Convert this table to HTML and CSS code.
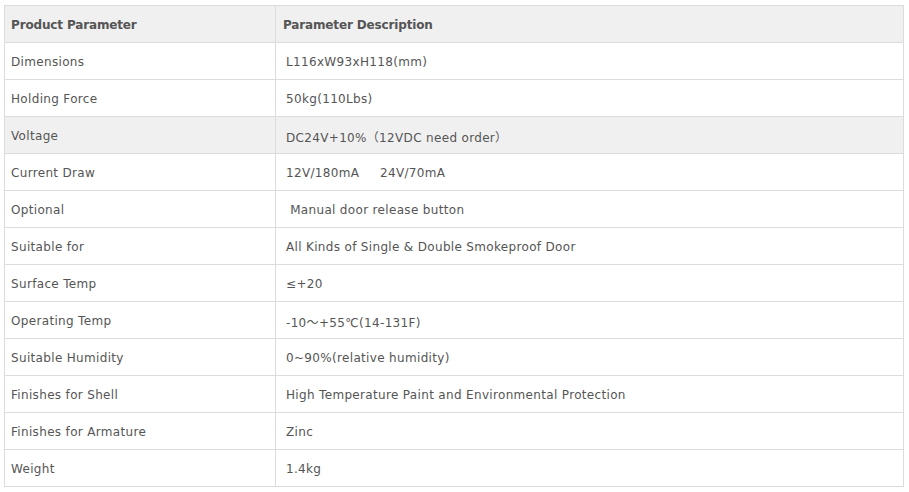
FILE: index.html
```html
<!DOCTYPE html>
<html>
<head>
<meta charset="utf-8">
<link rel="stylesheet" href="styles.css">
</head>
<body>
<table class="params">
  <tr class="head"><th class="c1">Product Parameter</th><th class="c2">Parameter Description</th></tr>
  <tr><td class="c1">Dimensions</td><td class="c2">L116xW93xH118(mm)</td></tr>
  <tr><td class="c1">Holding Force</td><td class="c2">50kg(110Lbs)</td></tr>
  <tr class="hl"><td class="c1">Voltage</td><td class="c2">DC24V+10%（12VDC need order）</td></tr>
  <tr><td class="c1">Current Draw</td><td class="c2">12V/180mA&nbsp;&nbsp;&nbsp;&nbsp; 24V/70mA</td></tr>
  <tr><td class="c1">Optional</td><td class="c2">&nbsp;Manual door release button</td></tr>
  <tr><td class="c1">Suitable for</td><td class="c2">All Kinds of Single &amp; Double Smokeproof Door</td></tr>
  <tr><td class="c1">Surface Temp</td><td class="c2">≤+20</td></tr>
  <tr><td class="c1">Operating Temp</td><td class="c2">-10～+55℃(14-131F)</td></tr>
  <tr><td class="c1">Suitable Humidity</td><td class="c2">0~90%(relative humidity)</td></tr>
  <tr><td class="c1">Finishes for Shell</td><td class="c2">High Temperature Paint and Environmental Protection</td></tr>
  <tr><td class="c1">Finishes for Armature</td><td class="c2">Zinc</td></tr>
  <tr><td class="c1">Weight</td><td class="c2">1.4kg</td></tr>
</table>
</body>
</html>
```
FILE: styles.css
```css
html, body {
  margin: 0;
  background: #fff;
}
body {
  padding: 5px 0 0 4px;
  font-family: "DejaVu Sans", Verdana, "Noto Sans CJK SC", sans-serif;
  font-size: 12px;
  color: #555;
}
.params {
  border-collapse: collapse;
  width: 900px;
  table-layout: fixed;
}
.params th, .params td {
  border: 1px solid #dcdcdc;
  height: 34px;
  padding: 2px 0 0 0;
  text-align: left;
  vertical-align: middle;
  white-space: pre;
  letter-spacing: 0.33px;
}
.params th {
  font-weight: bold;
  background: #f0f0f0;
  color: #555;
  letter-spacing: -0.15px;
}
.params .c1 {
  width: 271px;
  padding-left: 6px;
  box-sizing: border-box;
}
.params .c2 {
  padding-left: 10px;
}
.params th.c2 {
  padding-left: 7px;
}
.params tr.hl td {
  background: #f0f0f0;
}
```
